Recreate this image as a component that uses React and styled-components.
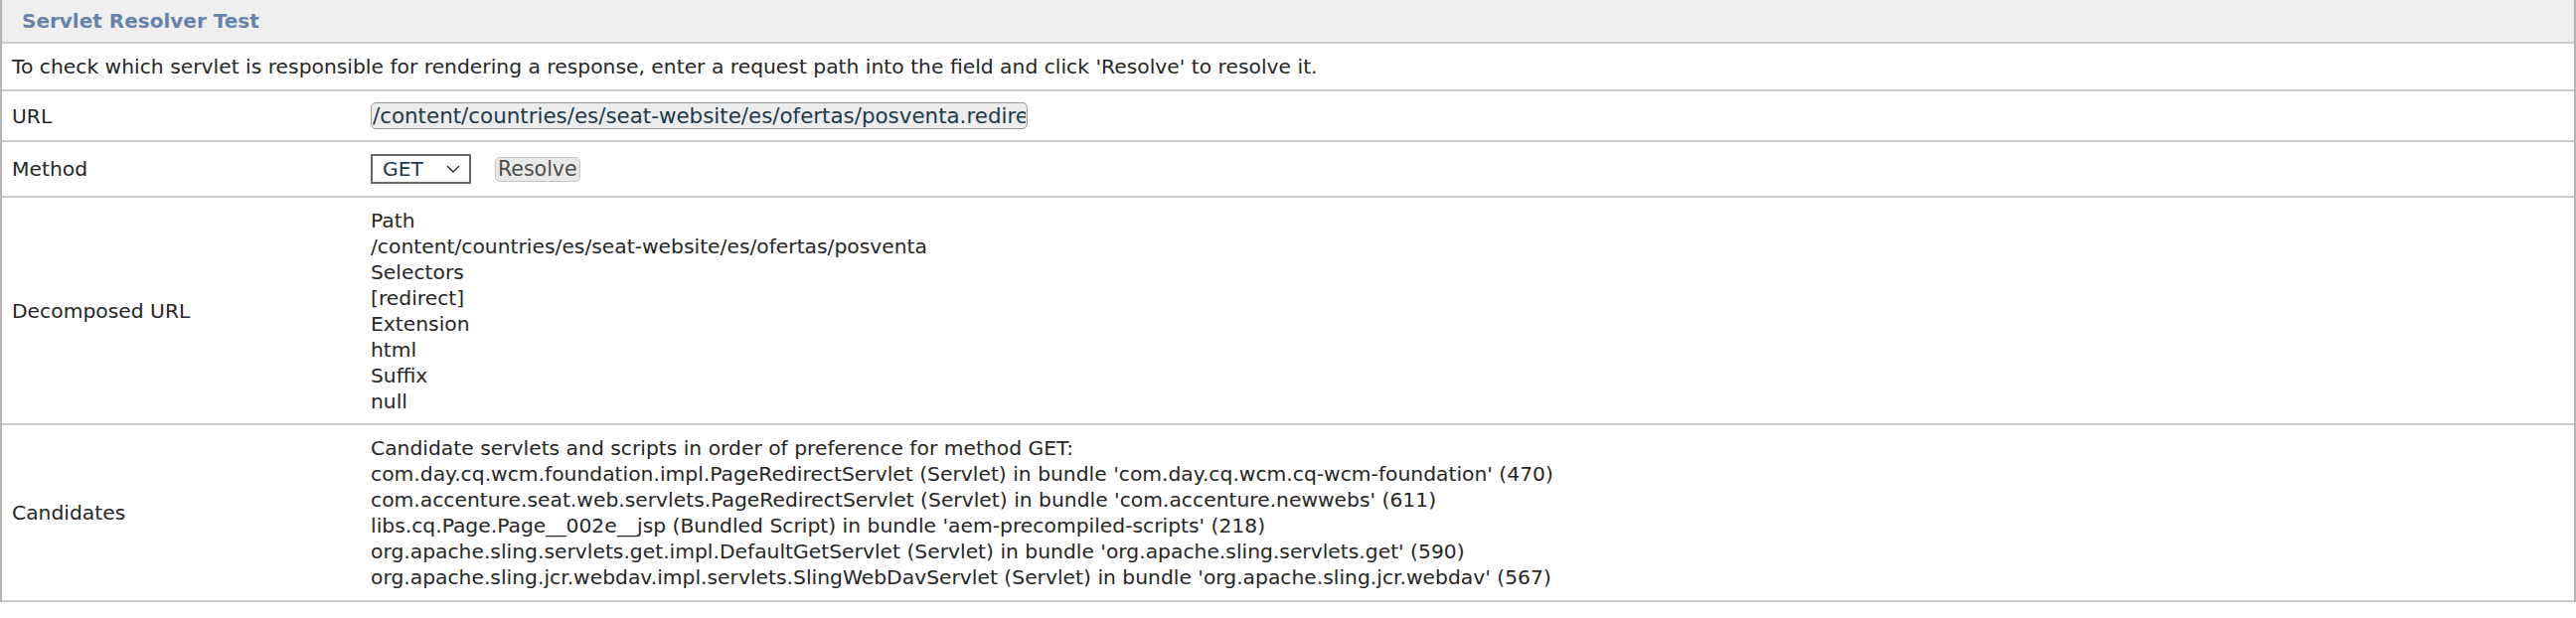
import React from "react";
import styled, { createGlobalStyle } from "styled-components";

const Global = createGlobalStyle`
  html, body { margin: 0; padding: 0; background: #ffffff; }
  body { font-family: "DejaVu Sans", Verdana, sans-serif; }
`;

const Panel = styled.section`
  width: 2592px;
  box-sizing: border-box;
  border-left: 2px solid #b4b4b4;
  border-right: 2px solid #b4b4b4;
  font-size: 20.3px;
  line-height: 26px;
  color: #262626;
`;

const Header = styled.h2`
  margin: 0;
  height: 42px;
  display: flex;
  align-items: center;
  padding-left: 20px;
  background: #efefef;
  border-bottom: 2px solid #cbcbcb;
  font-size: 20px;
  font-weight: bold;
  color: #6683ae;
`;

const Intro = styled.p`
  margin: 0;
  padding: 10px 10px;
  border-bottom: 2px solid #cbcbcb;
`;

const Row = styled.div`
  display: grid;
  grid-template-columns: 361px 1fr;
  align-items: center;
  padding: ${(p) => p.$pad || "10px"} 0;
  border-bottom: 2px solid #cbcbcb;
`;

const Label = styled.div`
  padding: 0 10px;
`;

const Value = styled.div`
  padding: 0 10px;
  display: flex;
  align-items: center;
  gap: 24px;
`;

const Lines = styled.div`
  padding: 0 10px;
  display: flex;
  flex-direction: column;
`;

const Line = styled.div`
  white-space: nowrap;
`;

const UrlInput = styled.input`
  box-sizing: border-box;
  width: 661px;
  height: 27px;
  margin: 1px 0;
  padding: 0 1px;
  border: 1px solid #9a9a9a;
  border-radius: 5px;
  background: #ececec;
  color: #1d3a4b;
  font-family: inherit;
  font-size: 21.4px;
  outline: none;
`;

const SelectWrap = styled.div`
  position: relative;
  width: 101px;
  height: 30px;
  margin: 2px 0;
`;

const Select = styled.select`
  appearance: none;
  -webkit-appearance: none;
  box-sizing: border-box;
  width: 100%;
  height: 100%;
  padding: 0 0 0 10px;
  border: 2px solid #6a6a6a;
  border-radius: 0;
  background: #ffffff;
  color: #1d3a4b;
  font-family: inherit;
  font-size: 20.3px;
  line-height: 26px;
`;

const Chevron = styled.svg`
  position: absolute;
  right: 11px;
  top: 11px;
  width: 14px;
  height: 8px;
  pointer-events: none;
`;

const Button = styled.button`
  box-sizing: border-box;
  height: 25px;
  padding: 0 2px;
  border: 1px solid #c4c4c4;
  border-radius: 5px;
  background: #e9e9e9;
  color: #4d4d4d;
  font-family: inherit;
  font-size: 20.5px;
  line-height: 23px;
`;

const decomposed = [
  "Path",
  "/content/countries/es/seat-website/es/ofertas/posventa",
  "Selectors",
  "[redirect]",
  "Extension",
  "html",
  "Suffix",
  "null",
];

const candidates = [
  "Candidate servlets and scripts in order of preference for method GET:",
  "com.day.cq.wcm.foundation.impl.PageRedirectServlet (Servlet) in bundle 'com.day.cq.wcm.cq-wcm-foundation' (470)",
  "com.accenture.seat.web.servlets.PageRedirectServlet (Servlet) in bundle 'com.accenture.newwebs' (611)",
  "libs.cq.Page.Page__002e__jsp (Bundled Script) in bundle 'aem-precompiled-scripts' (218)",
  "org.apache.sling.servlets.get.impl.DefaultGetServlet (Servlet) in bundle 'org.apache.sling.servlets.get' (590)",
  "org.apache.sling.jcr.webdav.impl.servlets.SlingWebDavServlet (Servlet) in bundle 'org.apache.sling.jcr.webdav' (567)",
];

export default function App() {
  return (
    <>
      <Global />
      <Panel>
        <Header>Servlet Resolver Test</Header>
        <Intro>
          To check which servlet is responsible for rendering a response, enter a request path into the field and click 'Resolve' to resolve it.
        </Intro>
        <Row>
          <Label>URL</Label>
          <Value>
            <UrlInput
              type="text"
              defaultValue="/content/countries/es/seat-website/es/ofertas/posventa.redirect.html"
            />
          </Value>
        </Row>
        <Row>
          <Label>Method</Label>
          <Value>
            <SelectWrap>
              <Select defaultValue="GET">
                <option>GET</option>
                <option>POST</option>
              </Select>
              <Chevron viewBox="0 0 14 8" fill="none" stroke="#2a2a2a" strokeWidth="1.4">
                <path d="M1 1l6 6 6-6" />
              </Chevron>
            </SelectWrap>
            <Button type="button">Resolve</Button>
          </Value>
        </Row>
        <Row $pad="9.5px">
          <Label>Decomposed URL</Label>
          <Lines>
            {decomposed.map((t, i) => (
              <Line key={i}>{t}</Line>
            ))}
          </Lines>
        </Row>
        <Row>
          <Label>Candidates</Label>
          <Lines>
            {candidates.map((t, i) => (
              <Line key={i}>{t}</Line>
            ))}
          </Lines>
        </Row>
      </Panel>
    </>
  );
}
